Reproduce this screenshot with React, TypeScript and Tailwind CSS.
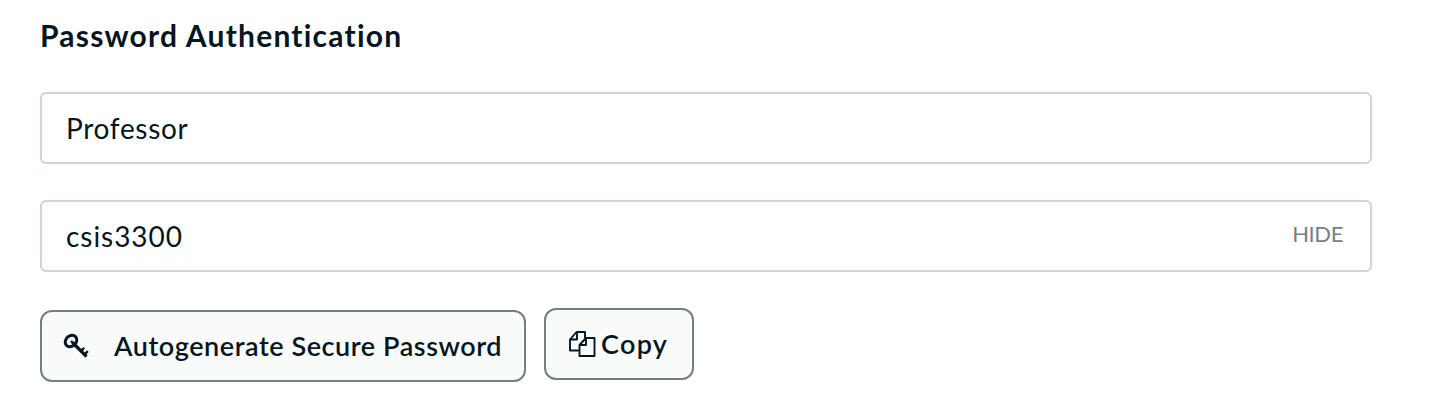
import React from "react";

function Key() {
  return (
    <svg width="28" height="28" viewBox="0 0 28 28" fill="none" stroke="#061621" className="shrink-0">
      <ellipse cx="9" cy="9" rx="6.3" ry="5.1" strokeWidth="3" transform="rotate(-42 9 9)" />
      <path d="M9 9l2 2" strokeWidth="2.4" />
      <path d="M10.5 10.5L24.5 24.5" strokeWidth="3.2" />
      <path d="M19 19l3.2-3.2M22.5 22.5l3.4-3.4" strokeWidth="2.4" />
    </svg>
  );
}

function CopyIcon() {
  return (
    <svg width="28" height="28" viewBox="0 0 28 28" fill="none" stroke="#061621" strokeWidth="1.9" strokeLinejoin="round" className="shrink-0">
      <path d="M11.5 20.5H2V9.5L8.5 2H17V8M9 2V9.5H2" />
      <path d="M18 8H26.5V26H11.5V15L18 8V15H11.5" />
    </svg>
  );
}

export default function App() {
  return (
    <main className="h-[402px] w-[1438px] overflow-hidden bg-white pl-10 pt-[15px] font-['Lato',sans-serif] text-[#061621]">
      <h2 className="h-[41px] whitespace-nowrap text-[30px] font-bold leading-[40px] tracking-[1.22px]">Password Authentication</h2>
      <div className="mt-9 flex h-[72px] w-[1332px] items-center rounded-md border-2 border-[#cdd4d2] px-6 text-[28px] tracking-[0.7px]">
        <span>Professor</span>
      </div>
      <div className="mt-9 flex h-[72px] w-[1332px] items-center justify-between rounded-md border-2 border-[#cdd4d2] px-6 text-[28px]">
        <span className="pb-px tracking-[0.95px]">csis3300</span>
        <span className="mr-[3px] pb-[5px] text-[22px] tracking-[-0.4px] text-[#75827f]">HIDE</span>
      </div>
      <div className="mt-9 flex gap-[18px] text-[27px] font-semibold">
        <button className="mt-0.5 flex h-[72px] w-[486px] items-center rounded-[12px] border-2 border-[#73807f] bg-[#f9fbfa] pl-5">
          <Key />
          <span className="ml-6 whitespace-nowrap pt-px tracking-[0.56px]">Autogenerate Secure Password</span>
        </button>
        <button className="flex h-[72px] w-[150px] items-center rounded-[12px] border-2 border-[#73807f] bg-[#f9fbfa] pl-[22px]">
          <CopyIcon />
          <span className="ml-[5px] pt-px tracking-[1.3px]">Copy</span>
        </button>
      </div>
    </main>
  );
}
